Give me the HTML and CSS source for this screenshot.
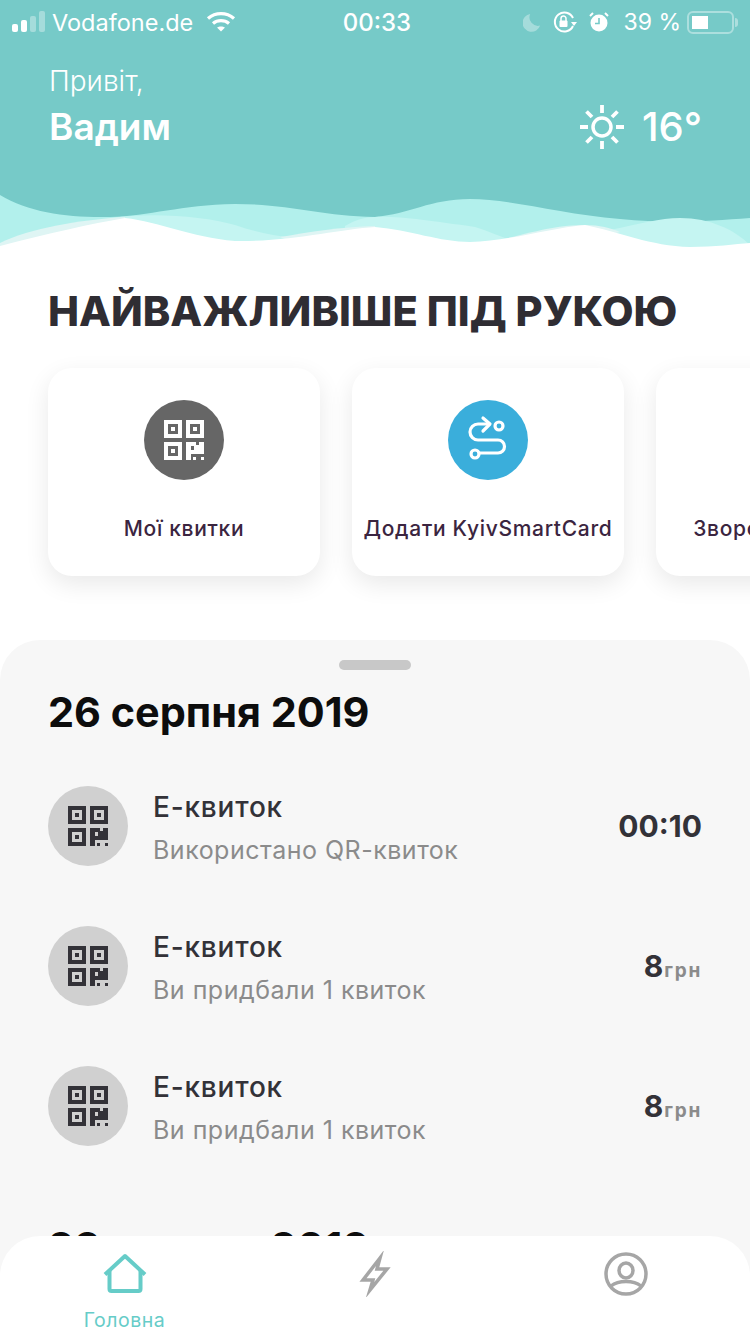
FILE: index.html
```html
<!DOCTYPE html>
<html lang="uk">
<head>
    <meta charset="UTF-8">
    <title>Головна</title>
    <link rel="stylesheet" href="styles.css">
</head>
<body>

<svg class="defs" width="0" height="0">
    <symbol id="qr" viewBox="0 0 40 40">
        <path fill-rule="evenodd" d="M0 0h18v18H0z M4 4v10h10V4z M7 7h4v4H7z"/>
        <path fill-rule="evenodd" d="M22 0h18v18H22z M26 4v10h10V4z M29 7h4v4h-4z"/>
        <path fill-rule="evenodd" d="M0 22h18v18H0z M4 26v10h10V26z M7 29h4v4H7z"/>
        <path d="M22 22h10v3h3v-3h5v12H27v6h-5z M29 37h3v3h-3z M37 37h3v3h-3z"/>
        <path class="qr-hole" d="M27 26h3v4h-3z"/>
    </symbol>
</svg>

<main class="page">

    <header class="top">
        <svg class="waves" viewBox="0 0 750 260" width="750" height="260" preserveAspectRatio="none">
            <rect width="750" height="260" fill="#76cac8"/>
            <path fill="#b2f0ec" d="M0 195C30 213 70 218 110 217C150 216 180 205 235 204C290 204 320 216 375 217C410 214 430 199 470 199C510 199 560 214 620 219C670 224 710 221 750 218V260H0Z"/>
            <path fill="#c5f5f2" d="M112 218C150 212 205 216 235 225C255 232 275 236 295 238L235 250L125 225Z"/>
            <path fill="#c5f5f2" d="M345 226C355 220 365 217 375 217C400 216 430 221 475 227C490 232 500 236 510 240L470 250L345 235Z"/>
            <path fill="#c5f5f2" d="M610 230C640 224 660 218 680 218C710 218 735 230 750 245V255H600Z"/>
            <path fill="#dff5f4" d="M0 243C30 228 80 220 125 217V235L0 250Z"/>
            <path fill="#dff5f4" d="M280 237C310 232 340 227 375 226V232L300 245Z"/>
            <path fill="#dff5f4" d="M500 240C540 230 560 225 585 225C600 225 610 228 620 232L570 245H500Z"/>
            <path fill="#ffffff" d="M0 246C50 233 90 224 125 218C160 222 190 237 235 241C290 242 340 229 375 227C410 230 440 242 470 242C510 241 550 228 585 225C620 232 650 246 690 247C715 247 735 244 750 243V260H0Z"/>
        </svg>

        <div class="status">
            <div class="status-left">
                <svg class="signal" width="34" height="22" viewBox="0 0 34 22">
                    <rect x="0" y="13" width="6" height="8" rx="2" fill="#fff"/>
                    <rect x="9" y="9" width="6" height="12" rx="2" fill="#fff"/>
                    <rect x="18" y="5" width="6" height="16" rx="2" fill="#fff" fill-opacity=".35"/>
                    <rect x="27" y="0" width="6" height="21" rx="2" fill="#fff" fill-opacity=".35"/>
                </svg>
                <span>Vodafone.de</span>
                <svg class="wifi" width="30" height="22" viewBox="0 0 30 22" fill="none" stroke="#fff" stroke-width="3.2">
                    <path d="M2 7.500C9.500 1 20.500 1 28 7.500"/>
                    <path d="M7 12.500C11.500 8.700 18.500 8.700 23 12.500"/>
                    <path d="M15 20.500L11 16.500C13 15 17 15 19 16.500Z" fill="#fff" stroke="none"/>
                </svg>
            </div>
            <div class="status-time">00:33</div>
            <div class="status-right">
                <svg width="18" height="20" viewBox="0 0 20 20"><path fill="#fff" fill-opacity=".35" d="M8 1A10 10 0 1 0 19 14A9.500 9.500 0 0 1 8 1Z"/></svg>
                <svg width="24" height="22" viewBox="0 0 24 22" fill="none" stroke="#fff" stroke-width="2">
                    <path d="M20 15A9.500 9.500 0 1 1 20 7"/>
                    <path d="M18 11h6l-3 4z" fill="#fff" stroke="none"/>
                    <rect x="6.500" y="9.500" width="8" height="6.500" rx="1" fill="#fff" stroke="none"/>
                    <path d="M8 10V7.500a2.500 2.500 0 0 1 5 0V10" stroke-width="1.500"/>
                </svg>
                <svg width="20" height="20" viewBox="0 0 20 20">
                    <circle cx="10" cy="11" r="8.500" fill="#fff"/>
                    <path d="M1 4L4 1 M19 4L16 1" stroke="#fff" stroke-width="2"/>
                    <path d="M10 6v5.500H6" fill="none" stroke="#76cac8" stroke-width="1.600"/>
                </svg>
                <span class="battery-pct">39 %</span>
                <div class="battery"><div class="battery-fill"></div></div>
                <div class="battery-tip"></div>
            </div>
        </div>

        <div class="hello">
            <div>
                <div class="hello-small">Привіт,</div>
                <div class="hello-name">Вадим</div>
            </div>
            <div class="weather">
                <svg width="44" height="44" viewBox="0 0 44 44" fill="none" stroke="#fff">
                    <circle cx="22" cy="22" r="9" stroke-width="3.500"/>
                    <path stroke-width="3.800" d="M22 0v8 M22 36v8 M0 22h8 M36 22h8 M6.500 6.500l5.500 5.500 M32 32l5.500 5.500 M6.500 37.500l5.500-5.500 M32 12l5.500-5.500"/>
                </svg>
                <span>16°</span>
            </div>
        </div>
    </header>

    <h1 class="title">НАЙВАЖЛИВІШЕ ПІД РУКОЮ</h1>

    <section class="cards">
        <div class="card">
            <div class="round round-grey"><svg class="qr" width="40" height="40"><use href="#qr"/></svg></div>
            <div class="card-text">Мої квитки</div>
        </div>
        <div class="card">
            <div class="round round-blue">
                <svg width="80" height="80" viewBox="0 0 80 80" fill="none" stroke="#fff" stroke-width="3.200" stroke-linecap="round" stroke-linejoin="round">
                    <path d="M41 24H30a8 8 0 0 0 0 16h20a6.500 6.500 0 0 1 0 13H32"/>
                    <path d="M35 18l7 6-7 7"/>
                    <circle cx="51" cy="26" r="4"/>
                    <circle cx="27" cy="54" r="4"/>
                </svg>
            </div>
            <div class="card-text">Додати KyivSmartCard</div>
        </div>
        <div class="card">
            <div class="round"></div>
            <div class="card-text">Зворотній зв'язок</div>
        </div>
    </section>

    <section class="sheet">
        <div class="handle"></div>
        <h2 class="date">26 серпня 2019</h2>

        <div class="row">
            <div class="round round-light"><svg class="qr" width="40" height="40"><use href="#qr"/></svg></div>
            <div class="row-info">
                <div class="row-title">Е-квиток</div>
                <div class="row-sub">Використано QR-квиток</div>
            </div>
            <div class="row-value">00:10</div>
        </div>
        <div class="row">
            <div class="round round-light"><svg class="qr" width="40" height="40"><use href="#qr"/></svg></div>
            <div class="row-info">
                <div class="row-title">Е-квиток</div>
                <div class="row-sub">Ви придбали 1 квиток</div>
            </div>
            <div class="row-value">8<small>грн</small></div>
        </div>
        <div class="row">
            <div class="round round-light"><svg class="qr" width="40" height="40"><use href="#qr"/></svg></div>
            <div class="row-info">
                <div class="row-title">Е-квиток</div>
                <div class="row-sub">Ви придбали 1 квиток</div>
            </div>
            <div class="row-value">8<small>грн</small></div>
        </div>

        <h2 class="date date-next">23 серпня 2019</h2>
    </section>

    <nav class="tabs">
        <div class="tab tab-active">
            <svg width="46" height="46" viewBox="0 0 46 46" fill="none" stroke="#66ccc8" stroke-width="4" stroke-linejoin="round">
                <path d="M3 23.500L23 5L43 23.500"/>
                <path d="M7.500 20V38a2 2 0 0 0 2 2H36.500a2 2 0 0 0 2-2V20"/>
            </svg>
            <span>Головна</span>
        </div>
        <div class="tab">
            <svg width="36" height="46" viewBox="0 0 36 46" fill="none" stroke="#a6a6a6" stroke-width="3.500" stroke-miterlimit="8">
                <path d="M23 7L6 29H16L13 39L30 18H20Z"/>
            </svg>
        </div>
        <div class="tab">
            <svg width="46" height="46" viewBox="0 0 46 46" fill="none" stroke="#a6a6a6" stroke-width="3.500">
                <circle cx="23" cy="23" r="20"/>
                <ellipse cx="23" cy="19.500" rx="7" ry="7.500"/>
                <path d="M8 35C13 31 18 30.500 23 30.500C28 30.500 33 31 38 35"/>
            </svg>
        </div>
    </nav>

</main>

</body>
</html>
```

FILE: styles.css
```css
* {
    box-sizing: border-box;
}
html, body {
    margin: 0;
    padding: 0;
}
body {
    font-family: Inter, "Noto Sans", sans-serif;
    background: #fff;
}
.defs {
    position: absolute;
}
.page {
    position: relative;
    width: 750px;
    height: 1334px;
    overflow: hidden;
}

/* header */
.top {
    position: relative;
    height: 260px;
    color: #fff;
}
.waves {
    position: absolute;
    left: 0;
    top: 0;
}
.status {
    position: relative;
    display: flex;
    justify-content: space-between;
    align-items: center;
    height: 44px;
    padding: 0 12px;
    font-size: 24px;
}
.status-left, .status-right {
    display: flex;
    align-items: center;
    width: 300px;
}
.status-left .wifi {
    margin-left: 13px;
}
.status-left span {
    margin-left: 6px;
    font-size: 23.500px;
}
.status-time {
    margin-left: 4px;
    font-weight: 500;
}
.status-right {
    justify-content: flex-end;
    gap: 12px;
}
.battery-pct {
    margin-left: 2px;
    font-size: 23px;
}
.battery {
    width: 47px;
    height: 23px;
    margin-left: -6px;
    padding: 3px;
    border: 2px solid rgba(255, 255, 255, .4);
    border-radius: 6px;
}
.battery-fill {
    width: 16px;
    height: 13px;
    background: #fff;
}
.battery-tip {
    width: 3px;
    height: 9px;
    margin-left: -11px;
    background: rgba(255, 255, 255, .4);
    border-radius: 0 3px 3px 0;
}
.hello {
    position: relative;
    display: flex;
    justify-content: space-between;
    align-items: flex-end;
    padding: 19px 48px 0 49px;
}
.hello-small {
    font-size: 28px;
    font-weight: 300;
    line-height: 36px;
}
.hello-name {
    margin-top: 6px;
    font-size: 37px;
    font-weight: 600;
    line-height: 44px;
}
.weather {
    display: flex;
    align-items: center;
    gap: 18px;
    margin-bottom: -2px;
    font-size: 40px;
    font-weight: 500;
}

/* cards */
.title {
    margin: 27px 0 0 48px;
    font-size: 41.500px;
    font-weight: 800;
    line-height: 48px;
    color: #2f2d33;
    white-space: nowrap;
}
.cards {
    display: flex;
    gap: 32px;
    padding: 33px 48px 0;
}
.card {
    display: flex;
    flex: none;
    flex-direction: column;
    align-items: center;
    width: 272px;
    height: 208px;
    padding-top: 32px;
    background: #fff;
    border-radius: 24px;
    box-shadow: 0 8px 24px rgba(0, 0, 0, .09);
}
.card-text {
    margin-top: 35px;
    font-size: 21px;
    font-weight: 500;
    line-height: 28px;
    letter-spacing: .7px;
    color: #3b2540;
    white-space: nowrap;
}
.round {
    display: flex;
    flex: none;
    justify-content: center;
    align-items: center;
    width: 80px;
    height: 80px;
    border-radius: 50%;
}
.round-grey {
    background: #666;
    color: #fff;
    --hole: #666;
}
.round-blue {
    background: #3aaedb;
}
.round-light {
    background: #d0d0d0;
    color: #333238;
    --hole: #d0d0d0;
}
.qr {
    fill: currentColor;
}
.qr-hole {
    fill: var(--hole);
}

/* sheet */
.sheet {
    height: 694px;
    margin-top: 64px;
    padding: 20px 48px 0;
    background: #f7f7f7;
    border-radius: 40px 40px 0 0;
}
.handle {
    width: 72px;
    height: 10px;
    margin: 0 auto;
    background: #c8c8c8;
    border-radius: 5px;
}
.date {
    margin: 18px 0 0;
    font-size: 41.400px;
    font-weight: 700;
    line-height: 48px;
    color: #0d0d0d;
}
.date-next {
    margin-top: 77px;
}
.row {
    display: flex;
    align-items: center;
    height: 80px;
    margin-top: 60px;
}
.date + .row {
    margin-top: 50px;
}
.row-info {
    flex: 1;
    margin-left: 25px;
    padding-top: 6px;
}
.row-title {
    font-size: 28px;
    font-weight: 500;
    line-height: 42px;
    letter-spacing: .8px;
    color: #333238;
}
.row-sub {
    font-size: 25px;
    line-height: 44px;
    letter-spacing: .5px;
    color: #8b8b8b;
}
.row-value {
    font-size: 30px;
    font-weight: 700;
    color: #333238;
}
.row-value small {
    margin-left: 1px;
    font-size: 19px;
    color: #8b8b8b;
    letter-spacing: 1.700px;
}

/* tab bar */
.tabs {
    position: absolute;
    left: 0;
    right: 0;
    bottom: 0;
    display: grid;
    grid-template-columns: 249px 252px 249px;
    height: 98px;
    background: #fff;
    border-radius: 40px 40px 0 0;
}
.tab {
    display: flex;
    flex-direction: column;
    align-items: center;
    padding-top: 15px;
}
.tab-active span {
    margin-top: 11px;
    font-size: 19.500px;
    line-height: 24px;
    letter-spacing: .5px;
    color: #66ccc8;
}
```
